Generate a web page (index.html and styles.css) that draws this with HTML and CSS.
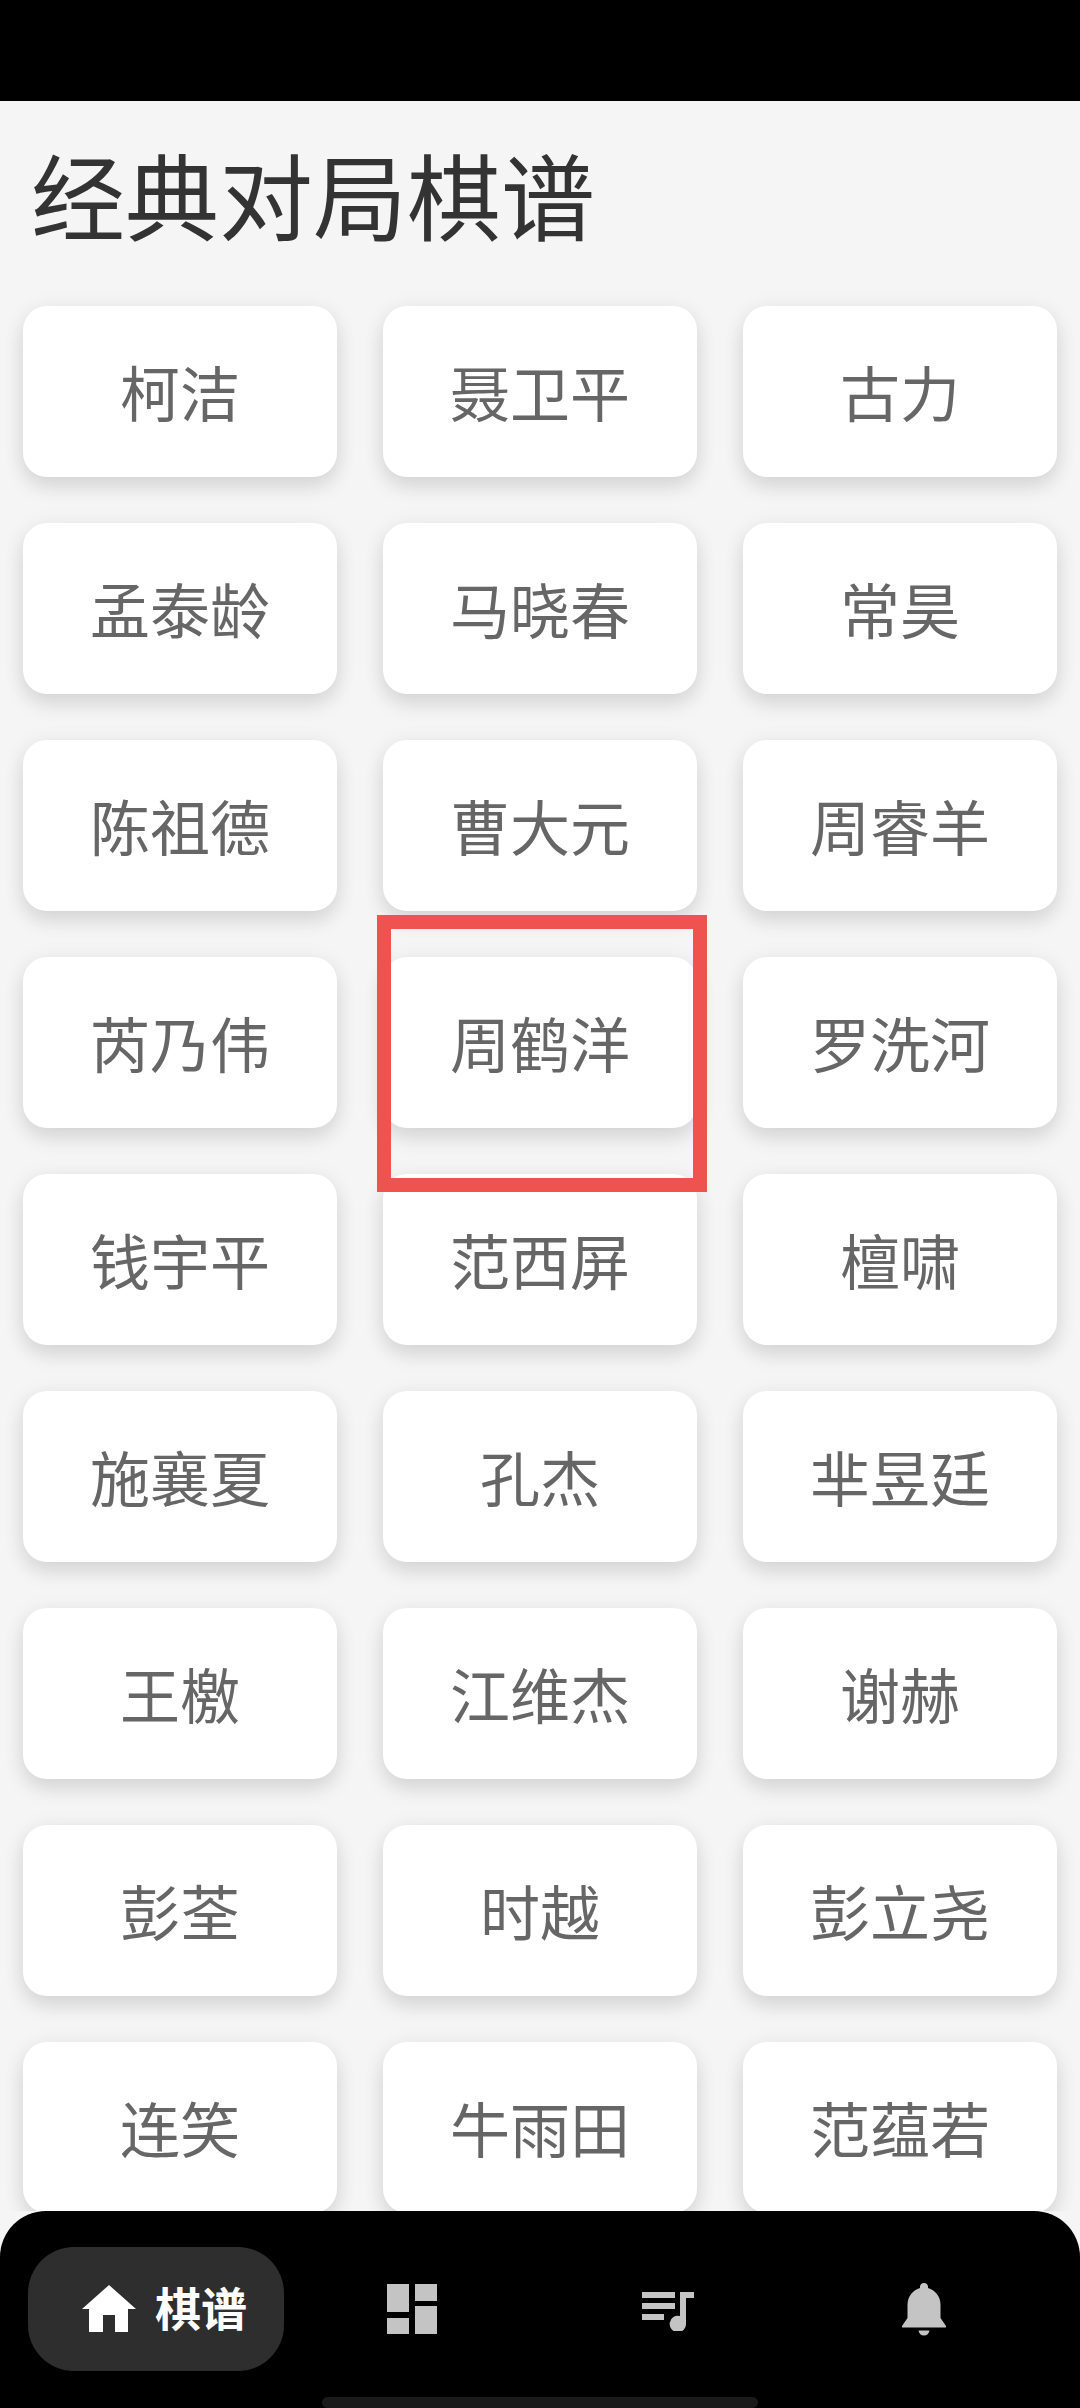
FILE: index.html
```html
<!DOCTYPE html>
<html lang="zh">
<head>
  <title>棋谱</title>
  <link rel="stylesheet" href="styles.css">
</head>
<body>
  <div class="status-bar"></div>
  <main class="content">
    <h1>经典对局棋谱</h1>
    <div class="players">
      <div class="card">柯洁</div>
      <div class="card">聂卫平</div>
      <div class="card">古力</div>
      <div class="card">孟泰龄</div>
      <div class="card">马晓春</div>
      <div class="card">常昊</div>
      <div class="card">陈祖德</div>
      <div class="card">曹大元</div>
      <div class="card">周睿羊</div>
      <div class="card">芮乃伟</div>
      <div class="card marked">周鹤洋</div>
      <div class="card">罗洗河</div>
      <div class="card">钱宇平</div>
      <div class="card">范西屏</div>
      <div class="card">檀啸</div>
      <div class="card">施襄夏</div>
      <div class="card">孔杰</div>
      <div class="card">芈昱廷</div>
      <div class="card">王檄</div>
      <div class="card">江维杰</div>
      <div class="card">谢赫</div>
      <div class="card">彭荃</div>
      <div class="card">时越</div>
      <div class="card">彭立尧</div>
      <div class="card">连笑</div>
      <div class="card">牛雨田</div>
      <div class="card">范蕴若</div>
    </div>
  </main>
  <nav class="tabbar">
    <div class="tab active">
      <svg class="home-icon" viewBox="0 0 54 47"><path d="M27 0 54 24H46V47H33V30H21V47H7V24H0Z"/></svg>
      <span class="tab-label">棋谱</span>
    </div>
    <div class="tab">
      <svg class="grid-icon" viewBox="0 0 50 50"><path d="M0 0H22V28H0ZM28 0H50V17H28ZM28 22H50V50H28ZM0 34H22V50H0Z"/></svg>
    </div>
    <div class="tab">
      <svg class="music-icon" viewBox="0 0 52 39"><path d="M0 0H33V6H0ZM0 11H33V17H0ZM0 22H22V28H0ZM38 0H52V6H44V31A8.200 8.200 0 1 1 38 24Z"/></svg>
    </div>
    <div class="tab">
      <svg class="bell-icon" viewBox="0 0 44 53"><path d="M22 0A4 4 0 0 1 26 3.500V5C33 7 38.500 13 38.500 22V35L44 43V44.500H0V43L5.500 35V22C5.500 13 11 7 18 5V3.500A4 4 0 0 1 22 0ZM16.500 47.500H27.500C27 50.500 25 52.500 22 52.500S17 50.500 16.500 47.500Z"/></svg>
    </div>
  </nav>
  <div class="home-bar"></div>
</body>
</html>
```

FILE: styles.css
```css
* {
  box-sizing: border-box;
}

body {
  margin: 0;
  height: 2408px;
  display: flex;
  flex-direction: column;
  overflow: hidden;
  background-color: #f5f5f5;
  font-family: "Noto Sans CJK SC", "Noto Sans", sans-serif;
}

.status-bar {
  height: 101px;
  background-color: #000;
}

.content {
  height: 2110px;
  overflow: hidden;
  padding: 0 23px;
}

h1 {
  margin: 0;
  padding: 31px 0 0 8px;
  height: 205px;
  font-size: 94px;
  line-height: 122px;
  font-weight: 400;
  color: #333;
}

.players {
  display: grid;
  grid-template-columns: repeat(3, 314px);
  grid-auto-rows: 171px;
  column-gap: 46px;
  row-gap: 46px;
}

.card {
  position: relative;
  display: flex;
  justify-content: center;
  align-items: center;
  padding-bottom: 3px;
  background-color: #fff;
  border-radius: 24px;
  box-shadow: 0 10px 20px rgba(0, 0, 0, 0.11), 0 2px 24px rgba(0, 0, 0, 0.05);
  font-size: 60px;
  color: #666;
}

.marked::after {
  content: "";
  position: absolute;
  z-index: 1;
  top: -42px;
  left: -6px;
  right: -10px;
  bottom: -64px;
  border: 14px solid #ef5350;
}

.tabbar {
  position: relative;
  height: 197px;
  display: grid;
  grid-template-columns: 256px 1fr 1fr 1fr;
  align-items: start;
  padding: 36px 28px 0;
  background-color: #000;
  border-radius: 46px 46px 0 0;
}

.tab {
  height: 124px;
  display: flex;
  justify-content: center;
  align-items: center;
}

.tab.active {
  gap: 19px;
  padding: 0 0 2px 17px;
  background-color: #2e2e2e;
  border-radius: 46px;
  font-size: 46px;
  font-weight: 700;
  color: #fff;
}

.tab-label {
  margin-bottom: 4px;
}

.home-icon {
  width: 54px;
  height: 47px;
  fill: #fff;
}

.grid-icon,
.music-icon,
.bell-icon {
  fill: #c4c4c4;
}

.grid-icon {
  width: 50px;
  height: 50px;
}

.music-icon {
  width: 52px;
  height: 39px;
  margin-top: 5px;
}

.bell-icon {
  width: 44px;
  height: 53px;
}

.home-bar {
  position: absolute;
  left: 322px;
  bottom: 0;
  width: 436px;
  height: 11px;
  background-color: #1a1a1a;
  border-radius: 6px;
}
```
